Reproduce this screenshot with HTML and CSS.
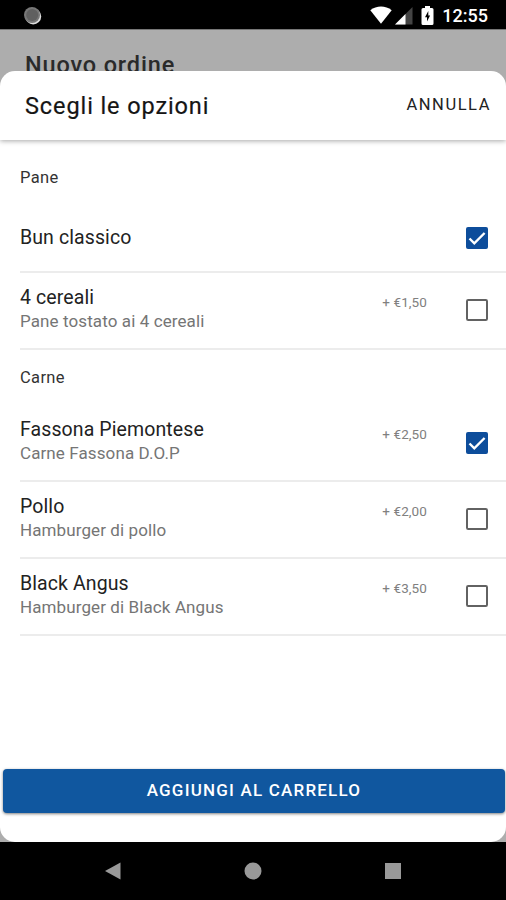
FILE: index.html
```html
<!DOCTYPE html>
<html lang="it">
<head>
<meta charset="utf-8">
<title>Scegli le opzioni</title>
<link rel="stylesheet" href="styles.css">
</head>
<body>
<div class="phone">
  <header class="status">
    <svg class="dot" viewBox="0 0 20 20"><circle cx="10.2" cy="10.4" r="8" fill="#ddd"/><circle cx="9" cy="9" r="8" fill="#777"/><circle cx="9.2" cy="9" r="6" fill="#606060"/></svg>
    <div class="indicators">
      <svg class="wifi" viewBox="0 0 22 18"><path d="M0.3 4.2C6.500-.8 15.500-.8 21.700 4.200L11 17.700z" fill="#fff"/></svg>
      <svg class="signal" viewBox="0 0 18 18"><path d="M17.500 0V17.500H0z" fill="#444"/><path d="M10.500 7V17.500H0z" fill="#fff"/></svg>
      <svg class="battery" viewBox="0 0 12 20"><path d="M3.500 0H8.500V2H10.500Q12 2 12 3.500V17.500Q12 19 10.500 19H1.500Q0 19 0 17.500V3.500Q0 2 1.500 2H3.500z" fill="#fff"/><path d="M6.800 5L3.500 11.300H5.500V15.500L8.600 9.600H6.800z" fill="#000"/></svg>
      <span class="clock">12:55</span>
    </div>
  </header>
  <main class="screen">
    <div class="page-title">Nuovo ordine</div>
    <section class="sheet">
      <div class="sheet-head">
        <h1>Scegli le opzioni</h1>
        <button class="cancel">ANNULLA</button>
      </div>
      <div class="options">
        <h2 class="first-group">Pane</h2>
        <div class="row">
          <div class="label"><div class="name bun">Bun classico</div></div>
          <svg class="check" viewBox="0 0 22 22"><rect width="22" height="22" rx="2" fill="#0d4d9b"/><path d="M3.500 11.500L8.300 16.300L18.600 6" fill="none" stroke="#fff" stroke-width="2.400"/></svg>
        </div>
        <div class="row">
          <div class="label"><div class="name">4 cereali</div><div class="desc">Pane tostato ai 4 cereali</div></div>
          <span class="price">+ €1,50</span>
          <svg class="check" viewBox="0 0 22 22"><rect x="1" y="1" width="20" height="20" rx="1.200" fill="#fff" stroke="#626262" stroke-width="2"/></svg>
        </div>
        <h2>Carne</h2>
        <div class="row">
          <div class="label raised"><div class="name">Fassona Piemontese</div><div class="desc">Carne Fassona D.O.P</div></div>
          <span class="price">+ €2,50</span>
          <svg class="check" viewBox="0 0 22 22"><rect width="22" height="22" rx="2" fill="#0d4d9b"/><path d="M3.500 11.500L8.300 16.300L18.600 6" fill="none" stroke="#fff" stroke-width="2.400"/></svg>
        </div>
        <div class="row">
          <div class="label"><div class="name">Pollo</div><div class="desc">Hamburger di pollo</div></div>
          <span class="price">+ €2,00</span>
          <svg class="check" viewBox="0 0 22 22"><rect x="1" y="1" width="20" height="20" rx="1.200" fill="#fff" stroke="#626262" stroke-width="2"/></svg>
        </div>
        <div class="row">
          <div class="label"><div class="name">Black Angus</div><div class="desc">Hamburger di Black Angus</div></div>
          <span class="price">+ €3,50</span>
          <svg class="check" viewBox="0 0 22 22"><rect x="1" y="1" width="20" height="20" rx="1.200" fill="#fff" stroke="#626262" stroke-width="2"/></svg>
        </div>
      </div>
      <button class="add">AGGIUNGI AL CARRELLO</button>
    </section>
  </main>
  <nav class="navbar">
    <svg viewBox="0 0 18 18"><path d="M1 9L16.500.500V17.500z" fill="#999"/></svg>
    <svg viewBox="0 0 18 18"><circle cx="9" cy="9" r="8.500" fill="#999"/></svg>
    <svg viewBox="0 0 18 18"><rect x="1" y="1" width="16" height="16" fill="#999"/></svg>
  </nav>
</div>
</body>
</html>
```
FILE: styles.css
```css
* { box-sizing: border-box; }
body { margin: 0; background: #000; font-family: Roboto, "Liberation Sans", sans-serif; }
button { border: 0; background: none; padding: 0; font: inherit; }
h1, h2 { margin: 0; }
svg { display: block; flex: none; }
.phone { width: 506px; height: 900px; display: flex; flex-direction: column; overflow: hidden; }
.status { height: 29px; background: #000; display: flex; justify-content: space-between; padding: 0 18px 0 23px; }
.dot { width: 20px; height: 20px; margin-top: 6px; }
.indicators { display: flex; align-items: flex-start; }
.wifi { width: 22px; height: 18px; margin: 6px 3px 0 0; }
.signal { width: 18px; height: 18px; margin: 7px 8px 0 0; }
.battery { width: 13px; height: 20px; margin: 6px 8px 0 0; }
.clock { color: #fff; font-size: 18px; font-weight: 500; line-height: 32px; }
.screen { height: 813px; background: #adadad; border-top: 1px solid #777; display: flex; flex-direction: column; }
.page-title { height: 41px; padding: 19px 0 0 25px; font-size: 23.500px; line-height: 32px; letter-spacing: .85px; font-weight: 500; color: #2a2a2a; }
.sheet { position: relative; flex: 1; background: #fff; border-radius: 15px; display: flex; flex-direction: column; overflow: hidden; padding-bottom: 29px; }
.sheet-head { height: 69px; flex: none; display: flex; align-items: center; justify-content: space-between; padding: 0 16px 0 25px; box-shadow: 0 1px 5px rgba(0,0,0,.35); }
h1 { font-size: 23.500px; font-weight: 400; letter-spacing: .9px; color: #151515; -webkit-text-stroke: .2px #151515; }
.cancel { font-size: 16.500px; letter-spacing: 1.550px; color: #222; padding-bottom: 2px; margin-right: -1px; }
.options { flex: 1; padding-left: 20px; }
h2 { height: 56px; line-height: 56px; font-size: 16.500px; font-weight: 400; letter-spacing: .35px; color: #333; }
.first-group { height: 63px; line-height: 75px; }
.row { height: 76.700px; border-bottom: 2px solid #ececec; display: flex; padding-right: 18px; }
.first-group + .row { height: 70px; }
.label { flex: 1; padding-top: 12px; }
.raised { padding-top: 11px; }
.name { font-size: 19.500px; line-height: 26px; letter-spacing: .1px; color: #222; }
.bun { padding-top: 10px; }
.desc { font-size: 17px; line-height: 22px; margin-top: -1px; letter-spacing: .1px; color: #757575; }
.price { font-size: 13.500px; line-height: 20px; letter-spacing: .1px; margin: 18.500px 39px 0 0; color: #808080; }
.check { width: 22px; height: 22px; margin-top: 26px; }
.first-group + .row .check { margin-top: 24px; }
.add { height: 44px; margin: 0 1px 0 3px; padding-bottom: 2px; border-radius: 4px; background: #10579f; color: #fff; font-size: 17px; font-weight: 500; letter-spacing: 1.200px; box-shadow: 0 1px 3px rgba(0,0,0,.5); }
.navbar { height: 58px; background: #000; display: flex; justify-content: space-between; padding: 20px 104px 0 104px; }
.navbar svg { width: 18px; height: 18px; }
```
